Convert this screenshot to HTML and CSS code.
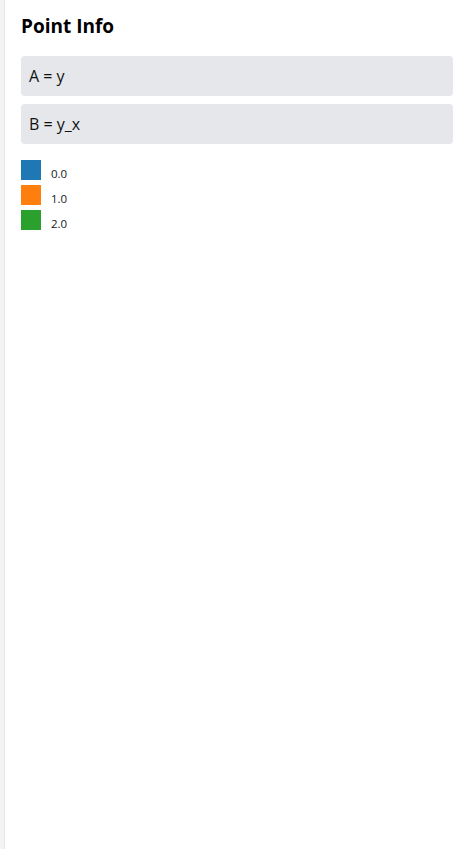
FILE: index.html
```html
<!DOCTYPE html>
<html>
<head>
<meta charset="utf-8">
<link rel="stylesheet" href="styles.css">
</head>
<body>
<div class="layout">
  <div class="edge"></div>
  <main class="panel">
    <h2 class="title">Point Info</h2>
    <div class="info">A = y</div>
    <div class="info">B = y_x</div>
    <ul class="legend">
      <li class="legend-item"><span class="swatch swatch-0"></span><span class="label">0.0</span></li>
      <li class="legend-item"><span class="swatch swatch-1"></span><span class="label">1.0</span></li>
      <li class="legend-item"><span class="swatch swatch-2"></span><span class="label">2.0</span></li>
    </ul>
  </main>
</div>
</body>
</html>
```
FILE: styles.css
```css
html, body {
  margin: 0;
  padding: 0;
  height: 100%;
  background: #ffffff;
  font-family: "Open Sans", "Noto Sans", sans-serif;
  color: #111111;
}
.layout {
  display: flex;
  min-height: 100%;
}
.edge {
  width: 4px;
  flex: none;
  background: #f3f4f6;
  border-right: 1px solid #e5e7eb;
}
.panel {
  flex: 1;
  padding: 12px 15px 0 16px;
  display: flex;
  flex-direction: column;
  gap: 8px;
}
.title {
  margin: 0 0 8px 0;
  font-size: 19px;
  font-weight: 700;
  line-height: 28px;
  color: #000;
}
.info {
  background: #e5e7eb;
  border-radius: 4px;
  height: 40px;
  padding: 0 8px;
  display: flex;
  align-items: center;
  font-size: 16px;
  color: #111;
}
.legend {
  list-style: none;
  margin: 8px 0 0 0;
  padding: 0;
  display: flex;
  flex-direction: column;
  gap: 5px;
}
.legend-item {
  display: flex;
  align-items: center;
  height: 20px;
}
.swatch {
  width: 20px;
  height: 20px;
  flex: none;
}
.swatch-0 { background: #1f77b4; }
.swatch-1 { background: #ff7f0e; }
.swatch-2 { background: #2ca02c; }
.label {
  margin-left: 10px;
  margin-top: 6px;
  font-size: 11.5px;
  color: #111827;
}
```
